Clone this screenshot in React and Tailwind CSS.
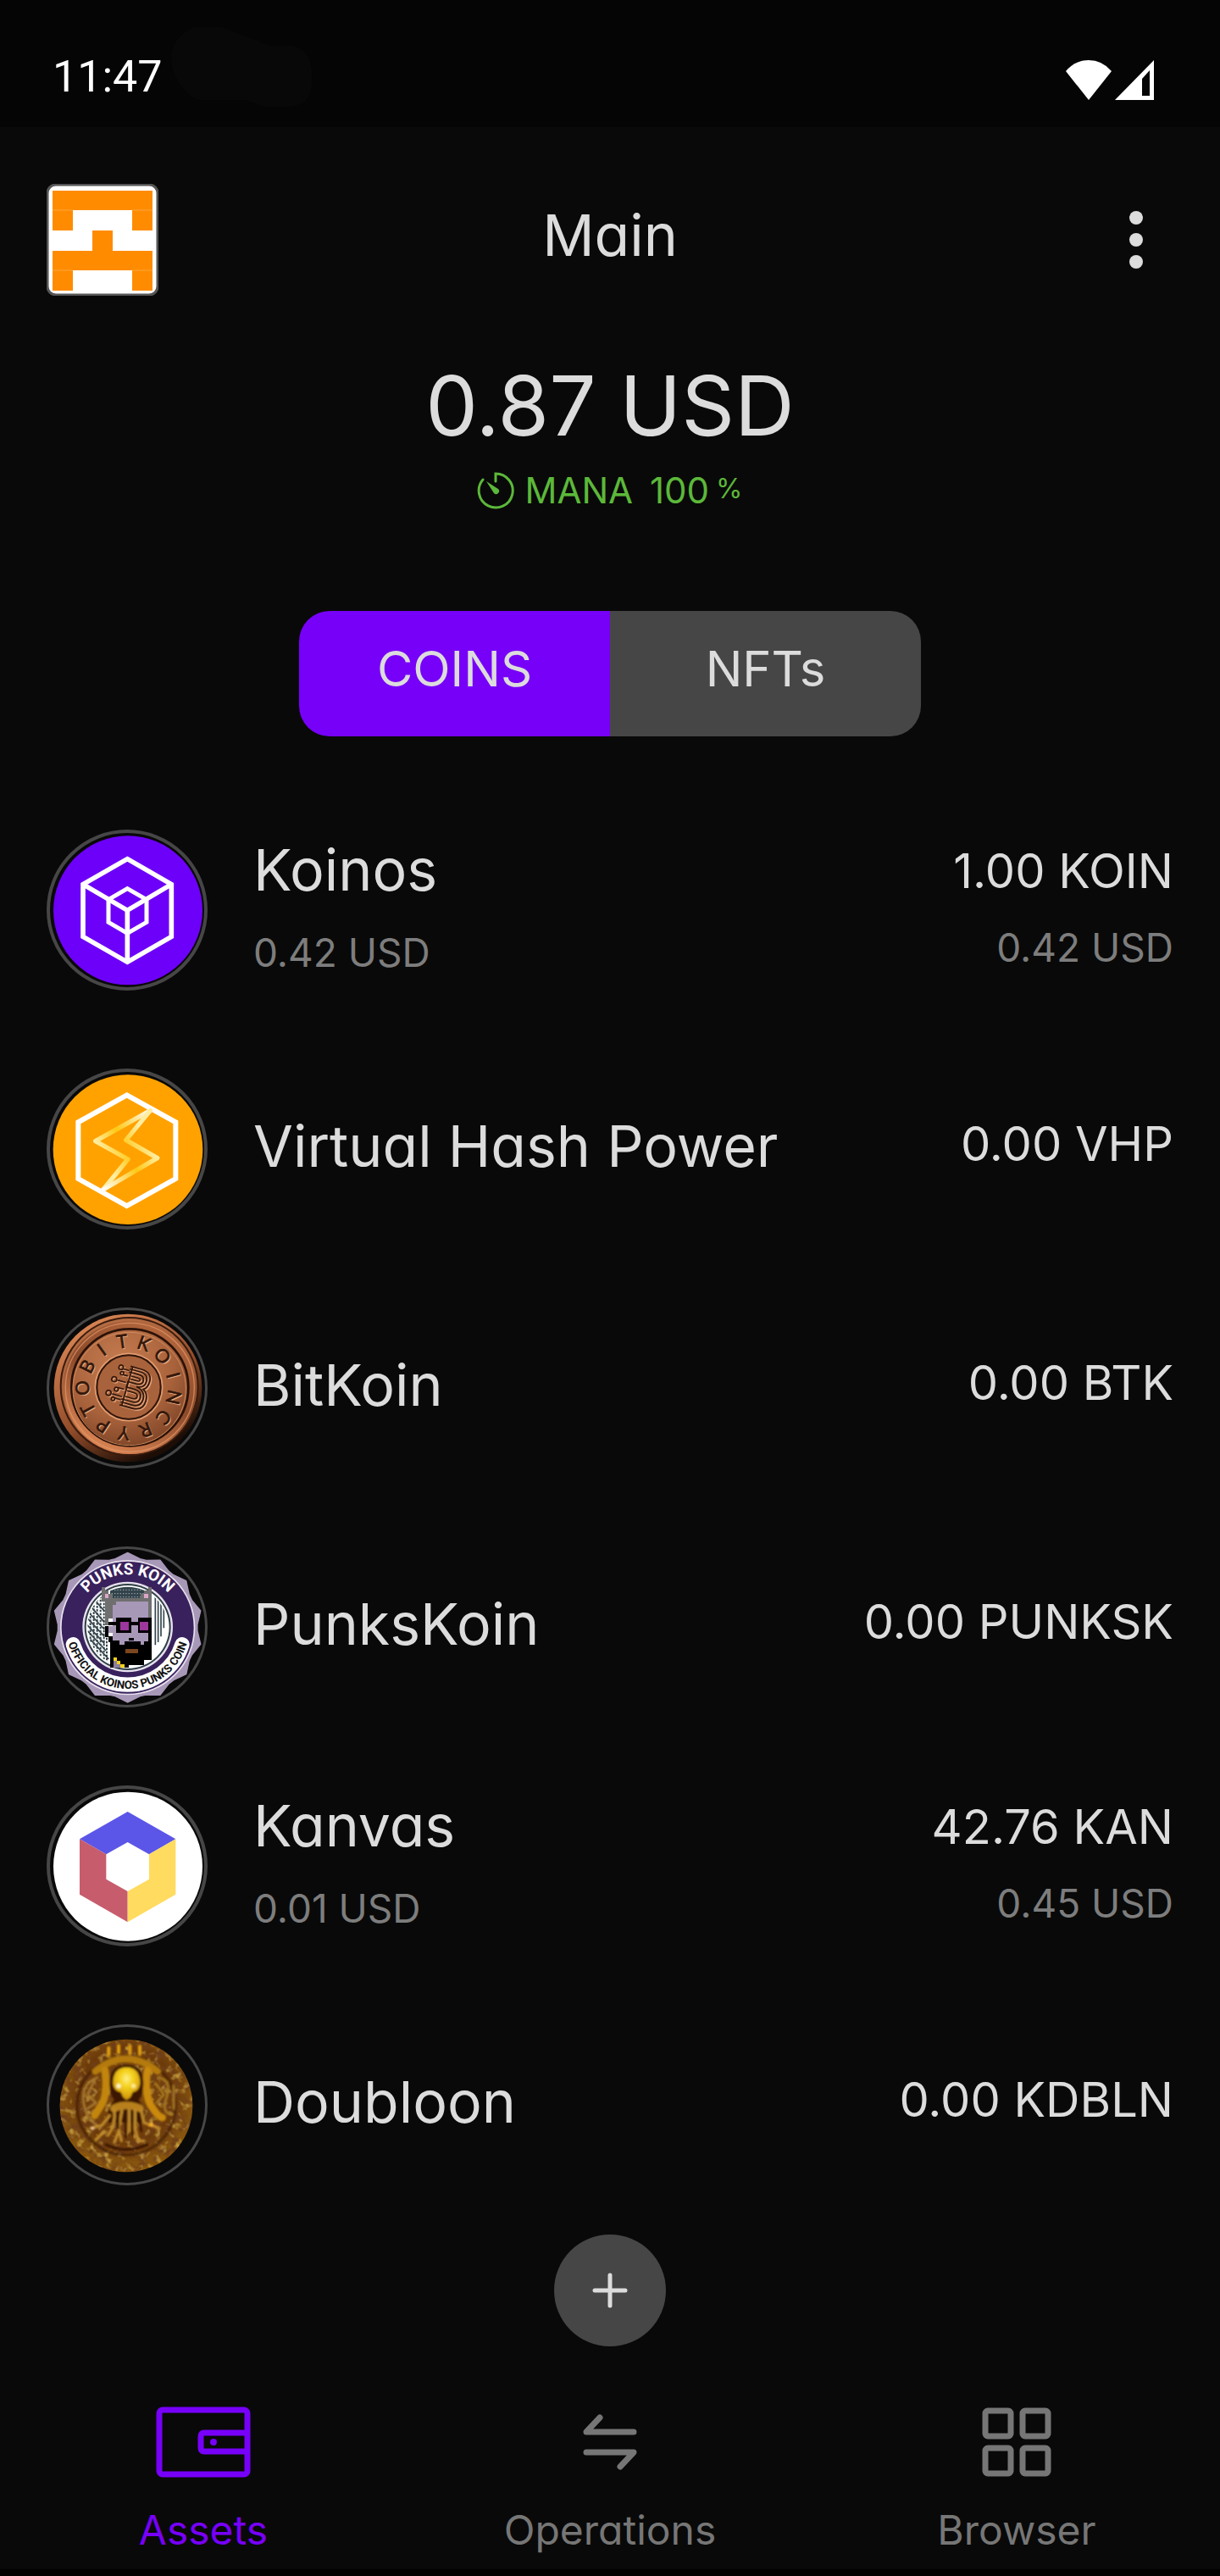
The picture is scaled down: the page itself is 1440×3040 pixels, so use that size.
const POLAR = (cx, cy, r, deg) => {
  const a = (deg * Math.PI) / 180;
  return [cx + r * Math.sin(a), cy - r * Math.cos(a)];
};

function Ring({ cy, width = 9 }) {
  return <circle cx="330" cy={cy} r={285 - width / 2} fill="none" stroke="#464646" strokeWidth={width} />;
}

function KoinosIcon() {
  return (
    <svg className="size-[190px] shrink-0" viewBox="45 61 570 570" aria-hidden="true">
      <Ring cy="346" width={12} />
      <circle cx="333" cy="347" r="264" fill="#6d00f8" />
      <g fill="none" stroke="#fff" strokeWidth="17">
        <path d="M331 165 487 255V440L331 530 174 440V255Z" />
        <path d="M174 255 331 347 487 255M331 347V530" />
        <path d="M331 270 399 309V389L331 428 264 389V309Z" strokeWidth="15" />
      </g>
    </svg>
  );
}

function VhpIcon() {
  return (
    <svg className="size-[190px] shrink-0" viewBox="45 53 570 570" aria-hidden="true">
      <defs>
        <linearGradient id="boltA" gradientUnits="userSpaceOnUse" x1="415" y1="200" x2="218" y2="310">
          <stop offset="0" stopColor="#fff" />
          <stop offset="0.62" stopColor="#ffc814" />
          <stop offset="1" stopColor="#ffeda0" />
        </linearGradient>
        <linearGradient id="boltB" gradientUnits="userSpaceOnUse" x1="245" y1="482" x2="437" y2="370">
          <stop offset="0" stopColor="#fff" />
          <stop offset="0.62" stopColor="#ffc814" />
          <stop offset="1" stopColor="#ffeda0" />
        </linearGradient>
      </defs>
      <Ring cy="338" width={12} />
      <circle cx="333" cy="340" r="265" fill="#ffa200" />
      <path d="M329 147 502 243V443L329 539 157 443V243Z" fill="none" stroke="#fff" strokeWidth="18" />
      <g fill="none" strokeWidth="16" strokeLinecap="round" strokeLinejoin="round">
        <path d="M245 482 333 374 218 310 412 202" stroke="url(#boltA)" />
        <path d="M412 202 326 306 437 370 245 482" stroke="url(#boltB)" />
      </g>
    </svg>
  );
}

const COIN_LETTERS = "TKOINCRYPTOBI".split("");

function CoinB({ stroke, dx }) {
  return (
    <g transform={`translate(${dx} ${dx}) rotate(16 350 330)`} fill="none" stroke={stroke} strokeWidth="5">
      <path d="M322 260H362Q402 260 402 294 402 318 388 326 408 336 408 362 408 402 366 402H322" />
      <path d="M322 270H360Q391 270 391 296 391 322 362 324 397 330 397 360 397 391 364 391H322" />
      <path d="M322 281H358Q380 281 380 298 380 315 356 315H328V335H358Q386 335 386 358 386 380 362 380H322" />
      <path d="M330 260V402M334 293H358Q368 293 368 298 368 304 356 304H334M334 347H358Q374 347 374 357 374 368 360 368H334" />
      <path d="M322 276H300M322 296H306M322 320H290M322 345H300M322 372H286M322 384H300" />
      <circle cx="291" cy="273" r="8" />
      <circle cx="300" cy="292" r="6" />
      <circle cx="279" cy="320" r="9" />
      <circle cx="296" cy="352" r="7" />
      <circle cx="273" cy="372" r="9" />
      <circle cx="294" cy="388" r="6" />
    </g>
  );
}

function BitKoinIcon() {
  return (
    <svg className="size-[190px] shrink-0" viewBox="45 47 570 570" aria-hidden="true">
      <defs>
        <radialGradient id="copper" cx="0.42" cy="0.3" r="0.75">
          <stop offset="0" stopColor="#c67c50" />
          <stop offset="0.6" stopColor="#a9633c" />
          <stop offset="1" stopColor="#7c4326" />
        </radialGradient>
        <linearGradient id="copperEdge" x1="0.2" y1="0" x2="0.8" y2="1">
          <stop offset="0" stopColor="#e08a57" />
          <stop offset="0.55" stopColor="#8f4b29" />
          <stop offset="0.9" stopColor="#1c0d06" />
        </linearGradient>
        <linearGradient id="copperLip" x1="0.8" y1="0" x2="0.3" y2="1">
          <stop offset="0" stopColor="#b5683e" />
          <stop offset="0.5" stopColor="#8b4a2a" />
          <stop offset="1" stopColor="#d98352" />
        </linearGradient>
      </defs>
      <Ring cy="332" />
      <circle cx="333" cy="332" r="262" fill="url(#copperEdge)" />
      <circle cx="338" cy="326" r="243" fill="url(#copper)" stroke="#3a1c0e" strokeWidth="6" />
      <circle cx="340" cy="330" r="222" fill="none" stroke="url(#copperLip)" strokeWidth="28" />
      <circle cx="340" cy="330" r="228" fill="none" stroke="#e39a6c" strokeWidth="4" opacity="0.7" />
      <circle cx="340" cy="330" r="207" fill="url(#copper)" stroke="#2a1208" strokeWidth="8" />
      <circle cx="338" cy="335" r="200" fill="none" stroke="#d08a5e" strokeWidth="3" />
      <circle cx="336" cy="329" r="119" fill="none" stroke="#e09c72" strokeWidth="5" />
      <circle cx="336" cy="329" r="113" fill="#a9633c" stroke="#2f1509" strokeWidth="6" />
      {COIN_LETTERS.map((letter, i) => {
        const deg = -8 + (i * 360) / 13;
        const [x, y] = POLAR(335, 329, 140, deg);
        return (
          <g key={i} fontFamily="Lato, sans-serif" fontSize="66" textAnchor="middle">
            <text x={x + 4} y={y + 4} fill="#e8aa82" transform={`rotate(${deg} ${x + 4} ${y + 4})`}>
              {letter}
            </text>
            <text x={x} y={y} fill="#33170a" stroke="#33170a" strokeWidth="2" transform={`rotate(${deg} ${x} ${y})`}>
              {letter}
            </text>
          </g>
        );
      })}
      <CoinB stroke="#e0a078" dx={4} />
      <CoinB stroke="#33170a" dx={0} />
    </svg>
  );
}

const SCALLOPS = Array.from({ length: 14 }, (_, i) => {
  const step = 360 / 14;
  const [px, py] = POLAR(332, 338, 265, i * step);
  const [mx, my] = POLAR(332, 338, 247, i * step + step * 0.4);
  const [qx, qy] = POLAR(332, 338, 247, i * step + step * 0.6);
  return `${i ? "L" : "M"}${px} ${py}L${mx} ${my}L${qx} ${qy}`;
}).join("");

function PunksIcon() {
  return (
    <svg className="size-[190px] shrink-0" viewBox="45 51 570 570" aria-hidden="true">
      <defs>
        <path id="punkTop" d="M144 338A188 188 0 0 1 520 338" />
        <path id="punkBottom" d="M115 338A217 217 0 0 0 549 338" />
        <clipPath id="punkDisc">
          <circle cx="332" cy="336" r="142" />
        </clipPath>
      </defs>
      <Ring cy="336" />
      <path d={`${SCALLOPS}Z`} fill="#a898b8" stroke="#a898b8" strokeWidth="4" strokeLinejoin="round" />
      <circle cx="332" cy="338" r="239" fill="#e8e2ee" />
      <circle cx="332" cy="338" r="234" fill="#38215c" />
      <path d="M139 398A202 202 0 0 0 525 398" fill="none" stroke="#fff" strokeWidth="52" strokeLinecap="round" />
      <circle cx="332" cy="336" r="160" fill="#e8e2ee" />
      <circle cx="332" cy="336" r="153" fill="#2f3f47" />
      <circle cx="332" cy="336" r="147" fill="#fff" />
      <g clipPath="url(#punkDisc)">
        <rect x="270" y="190" width="120" height="60" fill="#33444c" />
        <path d="M275 205H390M275 218H390M275 230H390" stroke="#a9b4b8" strokeWidth="3" strokeDasharray="4 6" />
        <path
          d="M190 250 250 320M185 275 250 345M185 300 250 370M185 325 250 395M190 350 255 420M200 380 265 450M215 240 250 280M430 220V400M440 225V390M450 240V370M460 260V340"
          stroke="#33444c"
          strokeWidth="5"
        />
        <path d="M200 250V400M212 235V420M224 225V435M236 215V445M248 215V455M258 350V465" stroke="#33444c" strokeWidth="6" strokeDasharray="8 4" />
      </g>
      <g shapeRendering="crispEdges">
        <path d="M239 194H252V207H265V220H278V233H378V220H391V207H404V194H417V320H404V246H291V259H278V307H265V330H252V246H239Z" fill="#6f6f6f" />
        <path d="M291 246H404V400H278V259H291Z" fill="#a898b8" />
        <path d="M252 218H265V235H252ZM391 218H404V235H391Z" fill="#dba6c8" />
        <path d="M265 318H291V304H346V318H369V304H417V356H369V330H346V356H291V330H265Z" fill="#000" />
        <path d="M307 318H336V347H307ZM375 318H404V347H375Z" fill="#9c379c" />
        <path d="M252 333H265V370H278V383H304V400H320V388H333H378V400H391V388H404V356H417V452H391V470H336V481H270V390H265V372H252Z" fill="#000" />
        <path d="M265 333H291V356H304V370H278V356H265Z" fill="#a898b8" />
        <path d="M336 374H355V385H336Z" fill="#000" />
        <path d="M323 413H369V430H323Z" fill="#7c461e" />
        <path d="M281 456H307V481H281Z" fill="#8d7fa0" />
        <path d="M281 443H294V456H307V469H320V481H307V469H294V456H281Z" fill="#f5d21a" />
      </g>
      <text fill="#fff" fontFamily="Roboto, sans-serif" fontWeight="700" fontSize="56" textAnchor="middle">
        <textPath href="#punkTop" startOffset="50%">
          PUNKS KOIN
        </textPath>
      </text>
      <text fill="#111" fontFamily="Roboto, sans-serif" fontWeight="700" fontSize="40" textAnchor="middle">
        <textPath href="#punkBottom" startOffset="50%">
          OFFICIAL KOINOS PUNKS COIN
        </textPath>
      </text>
    </svg>
  );
}

function KanvasIcon() {
  return (
    <svg className="size-[190px] shrink-0" viewBox="45 58 570 570" aria-hidden="true">
      <Ring cy="343" width={12} />
      <circle cx="333" cy="345" r="264" fill="#fff" />
      <path d="M332 151 502 248 408 302 332 259 256 302 162 248Z" fill="#5b56e8" />
      <path d="M162 248 256 302V390L332 433V542L162 444Z" fill="#c75c6c" />
      <path d="M502 248V444L332 542V433L408 390V302Z" fill="#ffdb60" />
    </svg>
  );
}

function DoubloonIcon() {
  return (
    <svg className="size-[190px] shrink-0" viewBox="45 52 570 570" aria-hidden="true">
      <defs>
        <radialGradient id="gold" cx="0.5" cy="0.42" r="0.6">
          <stop offset="0" stopColor="#8a520a" />
          <stop offset="0.6" stopColor="#6c3a0a" />
          <stop offset="0.85" stopColor="#85540f" />
          <stop offset="1" stopColor="#8c5608" />
        </radialGradient>
        <radialGradient id="skull" cx="0.5" cy="0.35" r="0.7">
          <stop offset="0" stopColor="#fff08a" />
          <stop offset="0.35" stopColor="#f5d21e" />
          <stop offset="1" stopColor="#c98606" />
        </radialGradient>
        <filter id="grain" x="0" y="0" width="1" height="1">
          <feTurbulence type="fractalNoise" baseFrequency="0.035" numOctaves="3" seed="7" />
          <feColorMatrix values="0 0 0 0 0.16  0 0 0 0 0.05  0 0 0 0 0.01  3 0 0 0 -1.3" />
          <feComposite in2="SourceGraphic" operator="in" />
        </filter>
        <filter id="glint" x="0" y="0" width="1" height="1">
          <feTurbulence type="fractalNoise" baseFrequency="0.04" numOctaves="2" seed="21" />
          <feColorMatrix values="0 0 0 0 0.72  0 0 0 0 0.48  0 0 0 0 0.08  0 2.2 0 0 -1.15" />
          <feComposite in2="SourceGraphic" operator="in" />
        </filter>
        <filter id="melt">
          <feGaussianBlur stdDeviation="3" />
        </filter>
      </defs>
      <Ring cy="337" />
      <circle cx="327" cy="340" r="235" fill="url(#gold)" />
      <circle cx="327" cy="340" r="235" filter="url(#grain)" />
      <circle cx="327" cy="340" r="235" filter="url(#glint)" />
      <g filter="url(#melt)" fill="none" strokeLinecap="round" strokeLinejoin="round">
        <circle cx="327" cy="340" r="174" stroke="#3a1805" strokeWidth="9" opacity="0.7" />
        <path d="M218 218Q325 130 438 218" stroke="#b47a0e" strokeWidth="24" />
        <path d="M252 215Q262 300 240 335T215 375" stroke="#c2860e" strokeWidth="26" />
        <path d="M402 215Q390 300 415 340T455 382" stroke="#ca8a0e" strokeWidth="26" />
        <path d="M225 240Q170 260 175 320T225 410M215 250 190 300 220 330 190 350" stroke="#a87a30" strokeWidth="8" />
        <path d="M440 240Q490 250 470 310T490 370M430 260 460 300 435 330M495 270V350" stroke="#a87a20" strokeWidth="8" />
        <path d="M268 260Q268 196 328 196T388 260Q388 300 372 320L395 360 390 400H262L265 350 284 320Q268 300 268 260Z" fill="#3c1806" />
        <path d="M280 262Q280 204 328 204T376 262Q372 290 350 292L342 310 328 320 316 310 308 292Q284 290 280 262Z" fill="url(#skull)" />
        <circle cx="300" cy="270" r="8" fill="#fff6c8" />
        <circle cx="353" cy="270" r="8" fill="#ffe98a" />
        <path d="M283 350Q325 328 376 350" stroke="#b8801c" strokeWidth="26" />
        <path d="M285 355Q290 410 262 445M312 355 300 420 310 465M337 355V430M358 355V420L370 465H390M380 355 390 400 445 420M268 375 240 410 200 420M300 430 285 470M250 430 220 460" stroke="#c08a2c" strokeWidth="10" />
        <path d="M298 365V420M325 365V450M348 365V440M372 370 380 430" stroke="#3a1405" strokeWidth="8" />
        <path d="M255 478Q327 512 400 478" stroke="#3a1405" strokeWidth="10" />
        <path d="M340 130V155M375 130V158M265 135V160M300 128V152" stroke="#e0a00c" strokeWidth="12" />
        <circle cx="416" cy="408" r="7" fill="#ffb02a" />
        <circle cx="208" cy="420" r="6" fill="#f0cf9a" />
      </g>
    </svg>
  );
}

const COINS = [
  { name: "Koinos", price: "0.42 USD", amount: "1.00 KOIN", value: "0.42 USD", Icon: KoinosIcon },
  { name: "Virtual Hash Power", amount: "0.00 VHP", Icon: VhpIcon },
  { name: "BitKoin", amount: "0.00 BTK", Icon: BitKoinIcon },
  { name: "PunksKoin", amount: "0.00 PUNKSK", Icon: PunksIcon },
  { name: "Kanvas", price: "0.01 USD", amount: "42.76 KAN", value: "0.45 USD", Icon: KanvasIcon },
  { name: "Doubloon", amount: "0.00 KDBLN", Icon: DoubloonIcon },
];

function StatusBar() {
  return (
    <div className="flex h-[150px] items-center bg-[#050505] pt-8 pl-[62px] pr-[78px]">
      <time className="font-[Roboto,sans-serif] text-[52px] leading-[60px] text-white">11:47</time>
      <svg className="ml-2 h-[94px] w-[170px] self-start" viewBox="0 0 170 94" aria-hidden="true">
        <path d="M28 0H62L120 22H145Q170 28 168 60 170 94 140 94H112L90 86H38Q20 84 6 56-8 18 28 0Z" fill="#080808" />
      </svg>
      <div className="ml-auto flex items-center gap-1 pt-2">
        <svg className="h-12 w-[54px]" viewBox="0 0 54 48" fill="#fff" aria-label="Wi-Fi">
          <path d="M0 13Q11 0 27 0T54 13L27 47Z" />
        </svg>
        <svg className="h-12 w-[46px]" viewBox="0 0 46 48" aria-label="Signal">
          <path d="M46 0V47H0ZM41 12 32 22V42H41Z" fill="#fff" fillRule="evenodd" />
        </svg>
      </div>
    </div>
  );
}

function Avatar() {
  return (
    <svg className="size-[132px]" viewBox="0 0 132 132" aria-hidden="true">
      <rect x="1" y="1" width="130" height="130" rx="10" fill="#fff" stroke="#555" strokeWidth="3" />
      <g fill="#ff8c00">
        <path d="M7 8H125V55H101V31H31V55H7Z" />
        <path d="M54 55H78V79H125V126H101V102H31V126H7V79H54Z" />
      </g>
      <path d="M7 31H31M101 31H125M7 102H31M101 102H125" stroke="#ffa63d" />
    </svg>
  );
}

function ManaIcon() {
  return (
    <svg className="size-[44px]" viewBox="0 0 44 44" aria-hidden="true">
      <path d="M7 9A20 20 0 1 0 22 2V11" fill="none" stroke="#5cb83a" strokeWidth="3" strokeLinecap="round" />
      <path d="M11 11 25 20A3 3 0 0 1 20 25Z" fill="#5cb83a" />
    </svg>
  );
}

function WalletIcon() {
  return (
    <svg className="h-[84px] w-28" viewBox="0 0 112 84" fill="none" stroke="currentColor" strokeWidth="7" aria-hidden="true">
      <rect x="4" y="4" width="104" height="76" rx="4" />
      <path d="M108 31H57Q53 31 53 36V48Q53 53 57 53H108" />
      <circle cx="68" cy="42" r="4" fill="currentColor" stroke="none" />
    </svg>
  );
}

function SwapIcon() {
  return (
    <svg className="h-[84px] w-16" viewBox="0 0 64 84" fill="none" stroke="currentColor" strokeWidth="7" strokeLinecap="round" strokeLinejoin="round" aria-hidden="true">
      <path d="M60 30H4L20 13M4 54H60L44 71" />
    </svg>
  );
}

function GridIcon() {
  return (
    <svg className="size-[84px]" viewBox="0 0 84 84" fill="none" stroke="currentColor" strokeWidth="7" aria-hidden="true">
      <rect x="5" y="5" width="30" height="30" rx="3" />
      <rect x="49" y="5" width="30" height="30" rx="3" />
      <rect x="5" y="49" width="30" height="30" rx="3" />
      <rect x="49" y="49" width="30" height="30" rx="3" />
    </svg>
  );
}

const TABS = [
  { label: "Assets", Icon: WalletIcon, color: "text-[#7700f8]" },
  { label: "Operations", Icon: SwapIcon, color: "text-[#767676]" },
  { label: "Browser", Icon: GridIcon, color: "text-[#767676]" },
];

function CoinRow({ name, price, amount, value, Icon }) {
  return (
    <li className="flex h-[282px] items-center">
      <Icon />
      <div className="ml-[54px] flex flex-col gap-7 pb-2">
        <span className="text-[68px] leading-[80px]">{name}</span>
        {price && <span className="text-[46px] leading-[60px] text-[#7d7d7d]">{price}</span>}
      </div>
      <div className="ml-auto flex flex-col gap-5 pb-3 text-right">
        <span className="text-[56px] leading-[80px]">{amount}</span>
        {value && <span className="text-[46px] leading-[60px] text-[#7d7d7d]">{value}</span>}
      </div>
    </li>
  );
}

export default function App() {
  return (
    <div className="flex min-h-screen flex-col bg-[#090909] font-[Inter,sans-serif] text-[#dcdcdc] [font-feature-settings:'cv11']">
      <StatusBar />
      <header className="grid grid-cols-[132px_1fr_132px] items-center px-[55px] pt-[67px]">
        <button type="button" aria-label="Account">
          <Avatar />
        </button>
        <h1 className="pb-3 text-center text-[68px] leading-[80px]">Main</h1>
        <button type="button" aria-label="More options" className="flex h-[132px] w-[88px] flex-col items-center justify-center gap-[10px] justify-self-end">
          <span className="size-4 rounded-full bg-[#dcdcdc]" />
          <span className="size-4 rounded-full bg-[#dcdcdc]" />
          <span className="size-4 rounded-full bg-[#dcdcdc]" />
        </button>
      </header>
      <main className="flex flex-col items-center">
        <p className="mt-[70px] text-[98px] leading-[120px]">0.87 USD</p>
        <p className="mt-2 flex items-center text-[42px] leading-[60px] text-[#5cb83a]">
          <ManaIcon />
          <span className="ml-3">MANA</span>
          <span className="ml-5">100</span>
          <span className="ml-2 pb-1 text-[32px]">%</span>
        </p>
        <div className="mt-[110px] grid w-[734px] max-w-full grid-cols-2 overflow-hidden rounded-[36px] text-[58px] leading-[80px]">
          <button type="button" aria-pressed="true" className="bg-[#7700f8] pt-7 pb-10">
            COINS
          </button>
          <button type="button" aria-pressed="false" className="bg-[#464646] pt-7 pb-10">
            NFTs
          </button>
        </div>
        <ul className="mt-16 w-full px-[55px]">
          {COINS.map((coin) => (
            <CoinRow key={coin.name} {...coin} />
          ))}
        </ul>
        <button type="button" aria-label="Add coin" className="mt-3 flex size-[132px] items-center justify-center rounded-full bg-[#464646]">
          <svg className="size-11" viewBox="0 0 44 44" stroke="#dcdcdc" strokeWidth="5" strokeLinecap="round" aria-hidden="true">
            <path d="M22 4V40M4 22H40" />
          </svg>
        </button>
      </main>
      <nav className="mt-auto grid grid-cols-3 border-b-8 border-black pb-[14px] text-[48px] leading-[64px]">
        {TABS.map(({ label, Icon, color }) => (
          <a key={label} href="#" className={`flex flex-col items-center gap-[30px] ${color}`}>
            <Icon />
            {label}
          </a>
        ))}
      </nav>
    </div>
  );
}
